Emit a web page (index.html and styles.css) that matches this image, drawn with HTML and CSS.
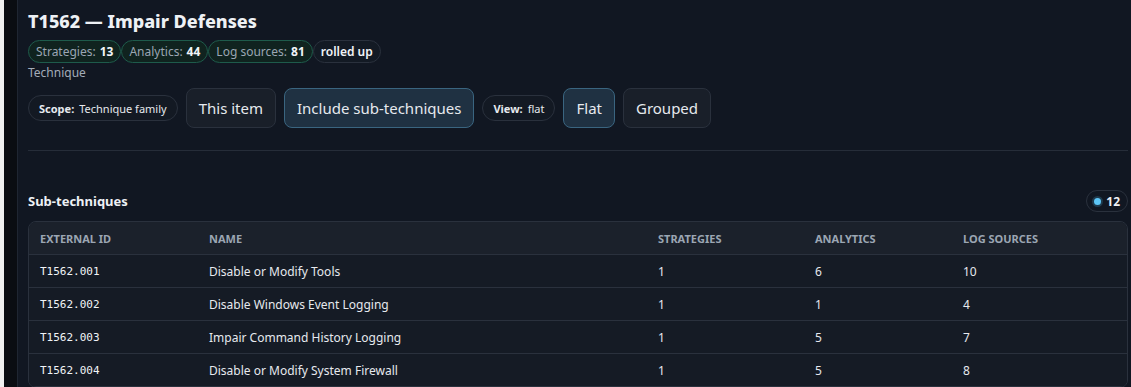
FILE: index.html
```html
<!DOCTYPE html>
<html lang="en">
<head>
  <meta charset="UTF-8" />
  <title>T1562 — Impair Defenses</title>
  <link rel="stylesheet" href="styles.css">
</head>
<body>
  <div class="edge"></div>
  <div class="rail"></div>

  <main class="main">
    <!-- Header -->
    <h1 class="title">T1562 — Impair Defenses</h1>
    <div class="chips">
      <span class="chip chip-teal">Strategies: <b>13</b></span>
      <span class="chip chip-teal">Analytics: <b>44</b></span>
      <span class="chip chip-teal">Log sources: <b>81</b></span>
      <span class="chip chip-plain"><b>rolled up</b></span>
    </div>
    <div class="kind">Technique</div>

    <!-- Controls -->
    <div class="controls">
      <span class="pill"><b>Scope:</b> Technique family</span>
      <button class="btn">This item</button>
      <button class="btn active">Include sub-techniques</button>
      <span class="pill"><b>View:</b> flat</span>
      <button class="btn active">Flat</button>
      <button class="btn">Grouped</button>
    </div>

    <hr class="divider">

    <!-- Sub-techniques -->
    <div class="section-head">
      <h2 class="section-title">Sub-techniques</h2>
      <span class="count"><span class="dot"></span>12</span>
    </div>

    <div class="table-wrap">
      <table class="grid">
        <colgroup>
          <col style="width: 169px">
          <col style="width: 449px">
          <col style="width: 157px">
          <col style="width: 148px">
          <col>
        </colgroup>
        <thead>
          <tr>
            <th>External ID</th>
            <th>Name</th>
            <th>Strategies</th>
            <th>Analytics</th>
            <th>Log sources</th>
          </tr>
        </thead>
        <tbody>
          <tr>
            <td class="mono">T1562.001</td>
            <td>Disable or Modify Tools</td>
            <td>1</td>
            <td>6</td>
            <td>10</td>
          </tr>
          <tr>
            <td class="mono">T1562.002</td>
            <td>Disable Windows Event Logging</td>
            <td>1</td>
            <td>1</td>
            <td>4</td>
          </tr>
          <tr>
            <td class="mono">T1562.003</td>
            <td>Impair Command History Logging</td>
            <td>1</td>
            <td>5</td>
            <td>7</td>
          </tr>
          <tr>
            <td class="mono">T1562.004</td>
            <td>Disable or Modify System Firewall</td>
            <td>1</td>
            <td>5</td>
            <td>8</td>
          </tr>
        </tbody>
      </table>
    </div>
  </main>
</body>
</html>
```

FILE: styles.css
```css
body {
  margin: 0;
  display: flex;
  height: 387px;
  overflow: hidden;
  background: #111722;
  color: #e6e9ee;
  font-family: "Noto Sans", "Open Sans", Arial, sans-serif;
}

.edge {
  width: 4px;
  flex: none;
  background: #f0f0f0;
}

.rail {
  width: 13px;
  flex: none;
  background: #0a0d12;
  border-right: 1px solid #1f2632;
}

.main {
  flex: 1;
  min-width: 0;
  padding: 9px 3px 0 10px;
}

.title {
  margin: 0;
  font-size: 18px;
  font-weight: 800;
  line-height: 24px;
  color: #eef1f5;
}

.chips {
  display: flex;
  margin-top: 7px;
}

.chip {
  display: inline-flex;
  align-items: center;
  height: 23px;
  padding: 0 7px;
  border-radius: 12px;
  font-size: 12px;
  color: #9ba6b3;
  box-sizing: border-box;
}

.chip b {
  color: #f1f4f7;
  margin-left: 4px;
}

.chip-teal {
  border: 1px solid #1e5b4b;
  background: #10231f;
}

.chip-plain {
  border: 1px solid #2a313d;
  background: #131a24;
}

.chip-plain b {
  margin-left: 0;
  font-weight: 600;
}

.kind {
  margin-top: 1px;
  font-size: 12px;
  color: #a3acb8;
  line-height: 17px;
}

.controls {
  display: flex;
  align-items: center;
  gap: 8px;
  margin-top: 7px;
}

.pill {
  display: inline-flex;
  align-items: center;
  height: 26px;
  padding: 0 10px;
  border: 1px solid #2a313d;
  border-radius: 13px;
  background: #131923;
  font-size: 11px;
  color: #e6e9ee;
  box-sizing: border-box;
}

.pill b {
  margin-right: 5px;
}

.btn {
  height: 40px;
  padding: 0 12px;
  border: 1px solid #2a313d;
  border-radius: 8px;
  background: #191f29;
  color: #e6e9ee;
  font-family: inherit;
  font-size: 15px;
}

.btn.active {
  background: #1f3142;
  border-color: #3a6580;
}

.divider {
  margin: 22px 0 0;
  border: 0;
  border-top: 1px solid #262d39;
}

.section-head {
  display: flex;
  align-items: center;
  justify-content: space-between;
  margin-top: 39px;
}

.section-title {
  margin: 0;
  font-size: 13px;
  font-weight: 700;
  color: #eef1f5;
}

.count {
  display: inline-flex;
  align-items: center;
  gap: 5px;
  height: 22px;
  padding: 0 7px;
  border: 1px solid #2a313d;
  border-radius: 11px;
  font-size: 12px;
  font-weight: 700;
  color: #eef1f5;
  box-sizing: border-box;
}

.dot {
  width: 7px;
  height: 7px;
  border-radius: 50%;
  background: #5cc6f7;
  box-shadow: 0 0 0 2px #1f3a4d;
}

.table-wrap {
  margin-top: 9px;
  border: 1px solid #2a313d;
  border-radius: 8px;
  overflow: hidden;
}

.grid {
  width: 100%;
  border-collapse: collapse;
  table-layout: fixed;
}

.grid th {
  height: 32px;
  padding: 0 11px;
  background: #1b212b;
  text-align: left;
  text-transform: uppercase;
  font-size: 11px;
  font-weight: 700;
  color: #9ba6b3;
  border-bottom: 1px solid #2a313d;
}

.grid td {
  height: 32px;
  padding: 0 11px;
  background: #151b25;
  font-size: 12px;
  color: #e6e9ee;
  border-bottom: 1px solid #2a313d;
}

.grid td.mono {
  font-family: "DejaVu Sans Mono", "Liberation Mono", monospace;
  font-size: 11px;
  color: #f1f4f7;
}
```
